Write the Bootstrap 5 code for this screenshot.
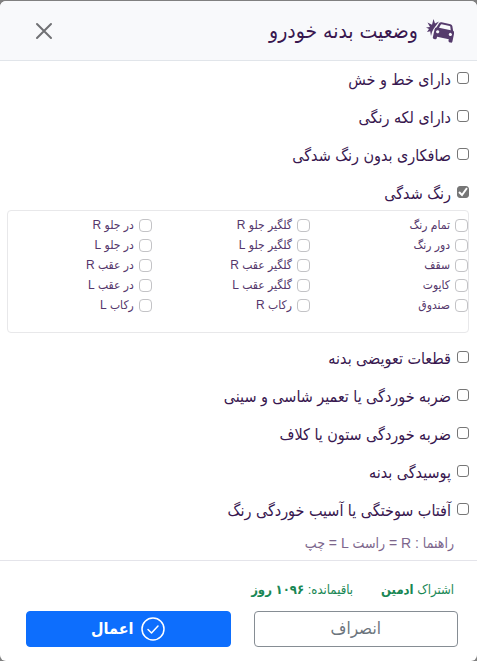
<!DOCTYPE html>
<html lang="fa" dir="rtl">
<head>
<meta charset="utf-8">
<meta name="viewport" content="width=device-width, initial-scale=1">
<title>وضعیت بدنه خودرو</title>
<link href="https://cdn.jsdelivr.net/npm/bootstrap@5.3.0/dist/css/bootstrap.min.css" rel="stylesheet">
<style>
body { background: #808080; color: #38174f; font-family: "Liberation Sans", "DejaVu Sans Condensed", "DejaVu Sans", sans-serif; }
.sheet { background: #fff; border-radius: 6px; margin-top: 1px; min-height: calc(100vh - 1px); }
.sheet-head { background: #f8f9fb; border-bottom: 1px solid #e1e5ea; border-radius: 6px 6px 0 0; height: 60px; padding: 0 23px 0 34px; }
.sheet-head h1 { font-size: 21px; line-height: 30px; }
.close-btn { color: #707174; line-height: 0; }
.options { padding: 4px 8px 0 7px; }
.option { height: 38px; gap: 6px; padding-top: 3px; }
.option input { appearance: none; width: 12px; height: 12px; border: 1px solid #767676; border-radius: 3px; margin-top: 4px; flex: none; background: #fff; }
.option input:checked { background: #767676 url("data:image/svg+xml,%3Csvg xmlns='http://www.w3.org/2000/svg' viewBox='0 0 12 12'%3E%3Cpath d='M2 6l3 3 5-7' fill='none' stroke='white' stroke-width='2'/%3E%3C/svg%3E") center / 12px; }
.option label { font-size: 16px; line-height: 24px; }
.option-open { height: 31px; }
.parts { display: grid; grid-template-columns: 11fr 11fr 10fr; border: 1px solid #e8e8ea; border-radius: 4px; height: 123px; margin: 0 0 11px; padding: 4px 0; }
.part { height: 20px; gap: 5px; color: #55376b; }
.part .form-check-input { width: 13px; height: 13px; margin: 0; flex: none; border-color: #c3c3c6; }
.part label { font-size: 12px; line-height: 20px; }
.guide { color: #7c668c; font-size: 14px; line-height: 18px; padding: 0 15px; }
.sheet-foot { border-top: 1px solid #e4e4ea; margin-top: 8px; padding: 19px 19px 14px 26px; }
.plan { font-size: 13px; line-height: 20px; gap: 28px; padding: 0 4px; margin-bottom: 11px; }
.actions { gap: 23px; }
.actions .btn { height: 36px; padding: 0; font-size: 17px; line-height: 34px; border-radius: 4px; }
.actions .btn-outline-secondary { border-color: #868d94; }
.actions .btn-primary { font-size: 16px; }
</style>
<script src="https://cdn.jsdelivr.net/npm/bootstrap@5.3.0/dist/js/bootstrap.bundle.min.js"></script>
</head>
<body>
<main class="sheet">
  <header class="sheet-head d-flex align-items-center justify-content-between">
    <div class="d-flex align-items-center gap-2">
      <svg width="28" height="24" viewBox="0 0 28 24" fill="#553b6c" aria-hidden="true">
        <path d="M0 8.500l4-.5-2.500-4.500 4.500 2.200L7.500 0l1.500 4.500 4-2-5.500 7.500-1.500 3-1 4-.8-4.700-3.200.7 2-3z"/>
        <g transform="rotate(12 18 14)">
          <path fill-rule="evenodd" d="M13.500 4h9q1.700 0 2.300 1.600l1.600 4.200q1.600.7 1.600 2.500v8.200q0 1.500-1.500 1.500h-1q-1.500 0-1.500-1.500V19H12v1.500q0 1.500-1.500 1.500h-1Q8 22 8 20.500v-8.200q0-1.800 1.600-2.500l1.600-4.200Q11.800 4 13.500 4zM13.900 6q-.6 0-.8.6L12 9.800h12l-1.100-3.200q-.2-.6-.8-.6zM11.500 12.500a1.600 1.600 0 1 0 .1 0zM24.500 12.500a1.600 1.600 0 1 0 .1 0z"/>
        </g>
      </svg>
      <h1 class="m-0 fw-normal">وضعیت بدنه خودرو</h1>
    </div>
    <button type="button" class="close-btn btn p-0 border-0" aria-label="بستن">
      <svg width="20" height="20" viewBox="0 0 20 20" fill="none" stroke="currentColor" stroke-width="2" stroke-linecap="round"><path d="M3 3l14 14M17 3L3 17"/></svg>
    </button>
  </header>

  <section class="options">
    <div class="option d-flex align-items-start"><input type="checkbox" id="o1"><label for="o1">دارای خط و خش</label></div>
    <div class="option d-flex align-items-start"><input type="checkbox" id="o2"><label for="o2">دارای لکه رنگی</label></div>
    <div class="option d-flex align-items-start"><input type="checkbox" id="o3"><label for="o3">صافکاری بدون رنگ شدگی</label></div>
    <div class="option option-open d-flex align-items-start"><input type="checkbox" id="o4" checked><label for="o4">رنگ شدگی</label></div>
    <div class="parts">
      <div>
        <div class="part d-flex align-items-center"><input class="form-check-input" type="checkbox" id="a1"><label for="a1">تمام رنگ</label></div>
        <div class="part d-flex align-items-center"><input class="form-check-input" type="checkbox" id="a2"><label for="a2">دور رنگ</label></div>
        <div class="part d-flex align-items-center"><input class="form-check-input" type="checkbox" id="a3"><label for="a3">سقف</label></div>
        <div class="part d-flex align-items-center"><input class="form-check-input" type="checkbox" id="a4"><label for="a4">کاپوت</label></div>
        <div class="part d-flex align-items-center"><input class="form-check-input" type="checkbox" id="a5"><label for="a5">صندوق</label></div>
      </div>
      <div>
        <div class="part d-flex align-items-center"><input class="form-check-input" type="checkbox" id="b1"><label for="b1">گلگیر جلو R</label></div>
        <div class="part d-flex align-items-center"><input class="form-check-input" type="checkbox" id="b2"><label for="b2">گلگیر جلو L</label></div>
        <div class="part d-flex align-items-center"><input class="form-check-input" type="checkbox" id="b3"><label for="b3">گلگیر عقب R</label></div>
        <div class="part d-flex align-items-center"><input class="form-check-input" type="checkbox" id="b4"><label for="b4">گلگیر عقب L</label></div>
        <div class="part d-flex align-items-center"><input class="form-check-input" type="checkbox" id="b5"><label for="b5">رکاب R</label></div>
      </div>
      <div>
        <div class="part d-flex align-items-center"><input class="form-check-input" type="checkbox" id="c1"><label for="c1">در جلو R</label></div>
        <div class="part d-flex align-items-center"><input class="form-check-input" type="checkbox" id="c2"><label for="c2">در جلو L</label></div>
        <div class="part d-flex align-items-center"><input class="form-check-input" type="checkbox" id="c3"><label for="c3">در عقب R</label></div>
        <div class="part d-flex align-items-center"><input class="form-check-input" type="checkbox" id="c4"><label for="c4">در عقب L</label></div>
        <div class="part d-flex align-items-center"><input class="form-check-input" type="checkbox" id="c5"><label for="c5">رکاب L</label></div>
      </div>
    </div>
    <div class="option d-flex align-items-start"><input type="checkbox" id="o5"><label for="o5">قطعات تعویضی بدنه</label></div>
    <div class="option d-flex align-items-start"><input type="checkbox" id="o6"><label for="o6">ضربه خوردگی یا تعمیر شاسی و سینی</label></div>
    <div class="option d-flex align-items-start"><input type="checkbox" id="o7"><label for="o7">ضربه خوردگی ستون یا کلاف</label></div>
    <div class="option d-flex align-items-start"><input type="checkbox" id="o8"><label for="o8">پوسیدگی بدنه</label></div>
    <div class="option d-flex align-items-start"><input type="checkbox" id="o9"><label for="o9">آفتاب سوختگی یا آسیب خوردگی رنگ</label></div>
    <p class="guide m-0">راهنما : R = راست L = چپ</p>
  </section>

  <footer class="sheet-foot">
    <div class="plan d-flex text-success">
      <span>اشتراک <strong>ادمین</strong></span>
      <span>باقیمانده: <strong>۱۰۹۶ روز</strong></span>
    </div>
    <div class="actions d-flex">
      <button type="button" class="btn btn-outline-secondary flex-fill w-50">انصراف</button>
      <button type="button" class="btn btn-primary flex-fill w-50 fw-bold d-flex align-items-center justify-content-center gap-2">
        <svg width="24" height="24" viewBox="0 0 24 24" fill="none" stroke="currentColor" stroke-width="1.500" stroke-linecap="round" stroke-linejoin="round" aria-hidden="true"><circle cx="12" cy="12" r="11"/><path d="M7 12.500l3.500 3.500 6.500-7"/></svg>
        <span>اعمال</span>
      </button>
    </div>
  </footer>
</main>
</body>
</html>
